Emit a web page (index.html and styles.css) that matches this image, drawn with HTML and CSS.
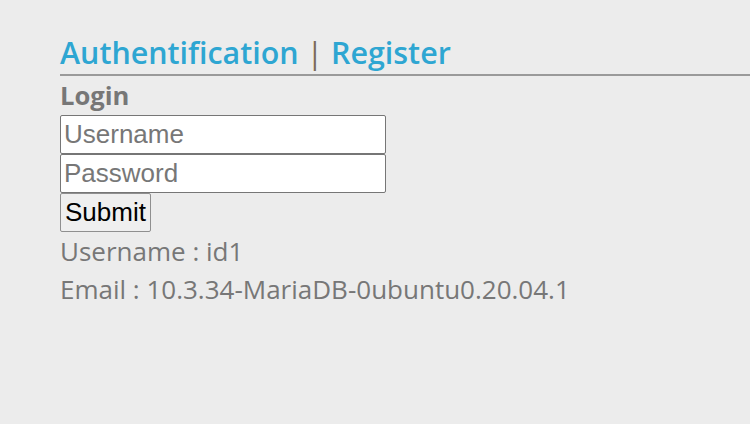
FILE: index.html
```html
<!DOCTYPE html>
<html>
<head>
<meta charset="utf-8">
<link rel="stylesheet" href="styles.css">
</head>
<body>
<div class="page">
  <h1 class="title"><a class="link">Authentification</a> <span class="sep">|</span> <a class="link">Register</a></h1>
  <div class="content">
    <div class="login-label">Login</div>
    <form class="form">
      <input class="field" type="text" placeholder="Username">
      <input class="field" type="password" placeholder="Password">
      <button class="submit" type="button">Submit</button>
    </form>
    <p class="info">Username : id1</p>
    <p class="info">Email : 10.3.34-MariaDB-0ubuntu0.20.04.1</p>
  </div>
</div>
</body>
</html>
```
FILE: styles.css
```css
html, body { margin: 0; padding: 0; }
body {
  background: #ececec;
  font-family: "Open Sans", sans-serif;
  color: #777;
}
.page { padding: 31px 0 0 60px; }
.title {
  margin: 0;
  font-size: 30.4px;
  font-weight: 600;
  line-height: 43px;
  border-bottom: 2px solid #9a9a9a;
}
.link { color: #2ea6d2; }
.sep { color: #7a6a5a; font-weight: 400; }
.login-label {
  font-weight: 700;
  font-size: 25.6px;
  line-height: 39px;
  height: 39px;
}
.form { display: flex; flex-direction: column; align-items: flex-start; }
.field {
  width: 326px;
  height: 39px;
  box-sizing: border-box;
  font-family: "Liberation Sans", Arial, sans-serif;
  font-size: 26px;
  padding: 0 3px;
  border: 1px solid #767676;
  border-radius: 2px;
  background: #fff;
  color: #000;
  margin: 0;
}
.field::placeholder { color: #777; }
.submit {
  height: 39px;
  box-sizing: border-box;
  font-family: "Liberation Sans", Arial, sans-serif;
  font-size: 26px;
  padding: 0 4px;
  border: 1px solid #8f8f8f;
  border-radius: 2px;
  background: #efefef;
  color: #000;
  margin: 0;
}
.info {
  margin: 0;
  font-size: 26px;
  line-height: 38px;
}
```
